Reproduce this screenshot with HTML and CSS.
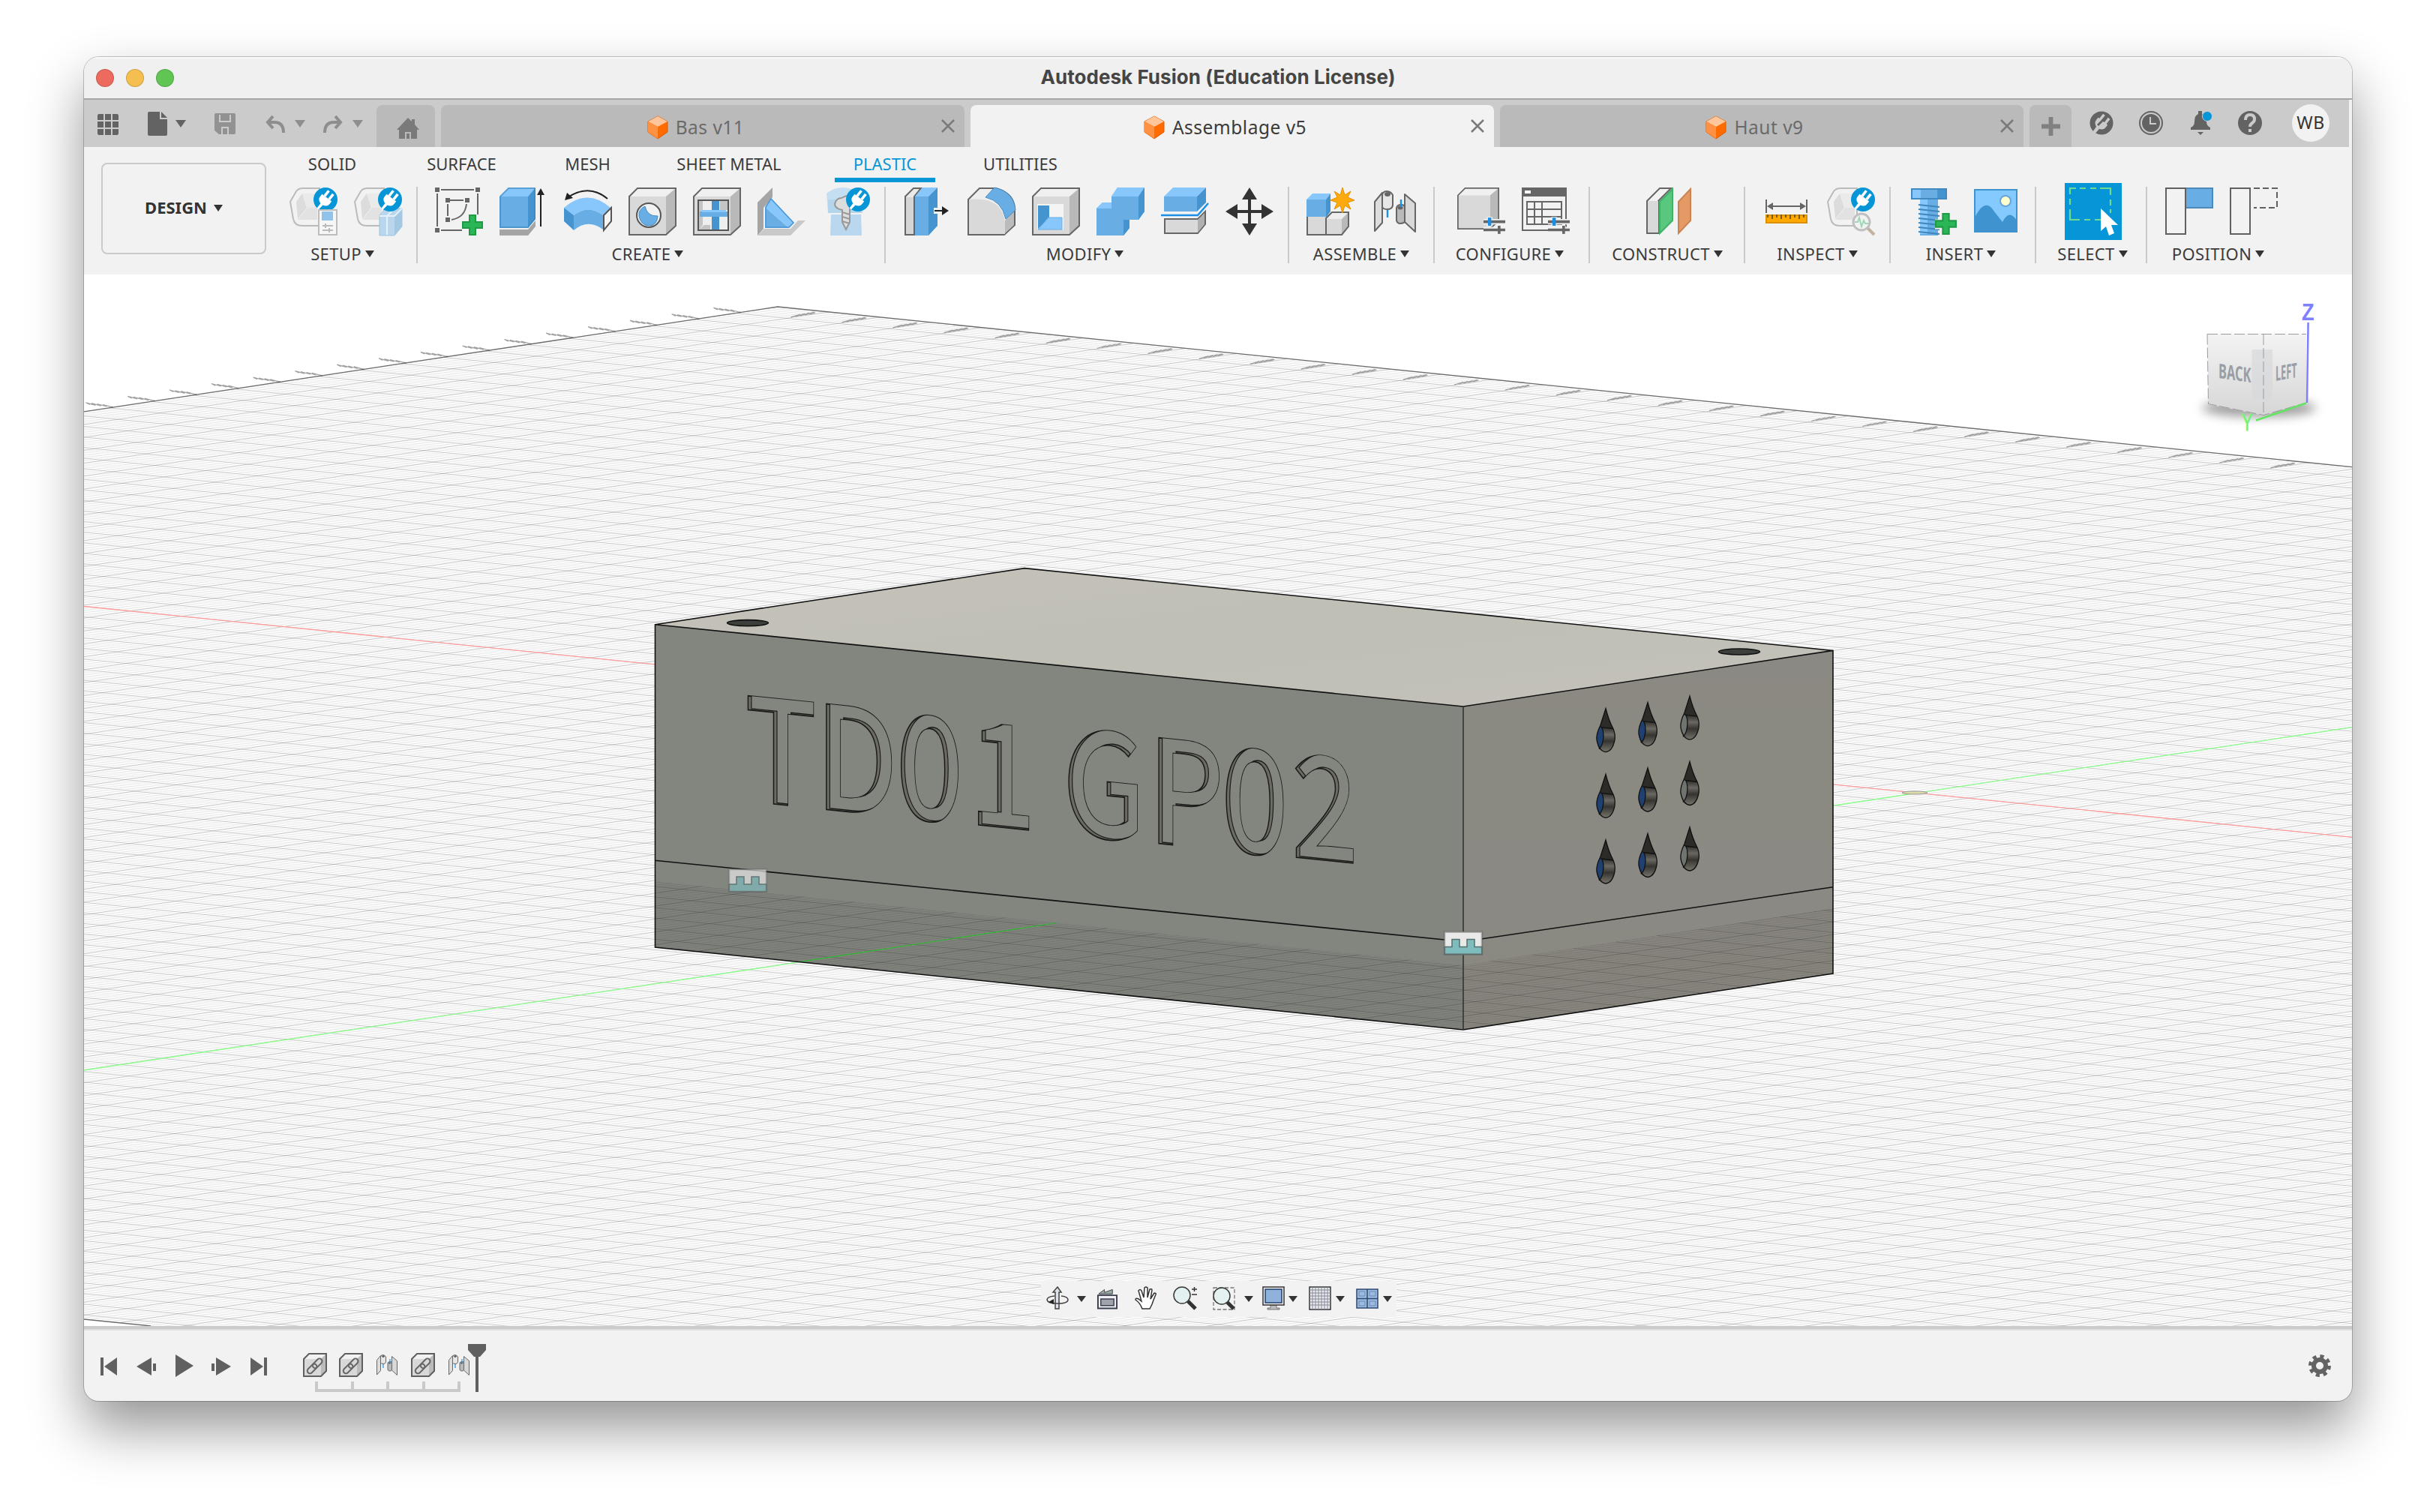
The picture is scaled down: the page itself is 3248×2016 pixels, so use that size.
FILE: index.html
```html
<!DOCTYPE html>
<html lang="en">
<head>
<meta charset="utf-8">
<title>Autodesk Fusion (Education License)</title>
<link rel="stylesheet" href="styles.css">
</head>
<body>
<svg class="sprite" aria-hidden="true">
  <defs>
    <symbol id="plug" viewBox="-16 -16 32 32" overflow="visible">
      <circle r="16" fill="#0696d7"/>
      <g transform="rotate(38)" fill="#fff"><path d="M-8-3H8v4a8 7 0 0 1-5.500 7L-2.500 8A8 7 0 0 1-8 1z"/><rect x="-5.500" y="-12" width="3.500" height="9"/><rect x="2" y="-12" width="3.500" height="9"/><path d="M-2 7h4l-1 9h-3z"/></g>
    </symbol>
    <symbol id="box" viewBox="0 0 64 64">
      <path d="M1 12 12 1h51L50 12z" fill="#f0f0f0"/><path d="M50 12 63 1v50L50 63z" fill="#b9b9b9"/><path d="M1 12h49v51H1z" fill="#d9d9d9"/>
      <path d="M1 12 12 1h51v50L50 63H1z" fill="none" stroke="#666" stroke-width="2"/>
    </symbol>
    <symbol id="shell" viewBox="0 0 64 64">
      <path d="M1 19 9 5q3-4 9-4h22v50H17q-10 0-12-9z" fill="#f2f2f2" stroke="#bbb" stroke-width="2"/>
      <path d="M9 19 17 8l6 19L11 42z" fill="#dcdcdc"/><path d="M17 8h20v19H23z" fill="#eaeaea"/><path d="M11 43l13-16h13v16z" fill="#e2e2e2"/>
    </symbol>
    <symbol id="doc" viewBox="0 0 30 34">
      <g fill="#ff6b00"><path d="M15 2 28 9v14L15 32 2 23V9z" stroke="#d95c00"/><path d="M15 2 28 9 15 16 2 9z" fill="#ffc69b"/><path d="M2 9l13 7v16L2 23z" fill="#ff9142"/></g>
    </symbol>
    <symbol id="close" viewBox="0 0 18 18"><path d="M1 1 17 17M17 1 1 17" stroke="#7a7a7a" stroke-width="2.500"/></symbol>
    <symbol id="link" viewBox="0 0 32 32">
      <path d="M1 8 8 1h23v23l-7 7H1z" fill="#f1f1f1"/><path d="M24 8 31 1v23l-7 7z" fill="#bbb"/><path d="M1 8h23v23H1z" fill="#d8d8d8"/>
      <path d="M1 8 8 1h23v23l-7 7H1z" fill="none" stroke="#5f5f5f" stroke-width="2"/>
      <g fill="none" stroke="#666" stroke-width="2" transform="rotate(-45 16 17)"><rect x="3" y="13.500" width="15" height="7" rx="3.500"/><rect x="13" y="13.500" width="15" height="7" rx="3.500"/></g>
    </symbol>
    <symbol id="joint" viewBox="0 0 64 64">
      <g stroke="#666" stroke-width="2" stroke-linejoin="round"><path d="M5 19 15 7v40L5 58z" fill="#ddd"/><path d="M15 10q1-5 6-5t8 5v14q-1 5-7 5t-7-3z" fill="#e6e6e6"/><ellipse cx="22" cy="9" rx="3" ry="2" fill="#666"/><path d="M45 9 59 21v38L45 46z" fill="#d8d8d8"/><path d="M34 27q1-4 6-4t5 3v20q-2 2-6 2t-5-4z" fill="#b9b9b9"/><ellipse cx="39" cy="27" rx="2.500" ry="1.500" fill="#666"/></g>
      <path d="M22 30v10M40 16v10" stroke="#1b8fe6" stroke-width="2.400"/>
    </symbol>
    <symbol id="sliders" viewBox="0 0 32 28" overflow="visible">
      <path d="M0 8h32M0 20h32M22 14v14M9 1v14" stroke="#f2f2f2" stroke-width="8"/>
      <path d="M0 8h32M0 20h32" stroke="#666" stroke-width="4"/><path d="M23 14v12" stroke="#666" stroke-width="4"/><path d="M9 2v12" stroke="#1b8fe6" stroke-width="5"/>
    </symbol>
    <symbol id="add" viewBox="0 0 28 28"><path d="M10 1h8v9h9v8h-9v9h-8v-9H1v-8h9z" fill="#2ab556" stroke="#219a45" stroke-width="2"/></symbol>
  </defs>
</svg>

<main class="window">
  <header class="titlebar">
    <div class="lights"><i class="light red"></i><i class="light amber"></i><i class="light green"></i></div>
    <h1 class="title">Autodesk Fusion (Education License)</h1>
  </header>

  <nav class="tabbar">
    <div class="quick">
      <svg class="q-grid" viewBox="0 0 28 28" fill="#636363"><path d="M0 2q0-2 2-2h6v8H0zM10 0h8v8h-8zM20 0h6q2 0 2 2v6h-8zM0 10h8v8H0zM10 10h8v8h-8zM20 10h8v8h-8zM0 20h8v8H2q-2 0-2-2zM10 20h8v8h-8zM20 20h8v6q0 2-2 2h-6z"/></svg>
      <svg class="q-file" viewBox="0 0 26 32" fill="#636363"><path d="M2 0h14v10h10v20q0 2-2 2H2q-2 0-2-2V2q0-2 2-2z"/><path d="M18 0l8 8h-8z"/></svg>
      <i class="caret big"></i>
      <svg class="q-save" viewBox="0 0 28 28" fill="#929292"><path fill-rule="evenodd" d="M2 0h24q2 0 2 2v24q0 2-2 2H6l-6-5V2q0-2 2-2zM6 2v10h16V2h-2v8H8V2zM9 18v10h2v-8h6v8h2V18z"/><path d="M12 22h3v6h-3z"/></svg>
      <svg class="q-undo" viewBox="0 0 26 24" fill="none" stroke="#8e8e8e" stroke-width="4"><path d="M10 2 3 10l7 8M4 10h8q12 0 12 14"/></svg>
      <i class="caret big pale"></i>
      <svg class="q-redo" viewBox="0 0 26 24" fill="none" stroke="#8e8e8e" stroke-width="4"><path d="M16 2l7 8-7 8M22 10h-8Q2 10 2 24"/></svg>
      <i class="caret big pale"></i>
    </div>
    <div class="tab home"><svg class="ic-home" viewBox="0 0 30 28" fill="#7a7a7a"><path d="M15 0l5 5V2h4v7l6 7h-3v12h-8v-9h-8v9H3V16H0z"/><path d="M13 21h4v7h-4z"/></svg></div>
    <div class="tab"><span class="name"><svg class="ic-doc"><use href="#doc"/></svg>Bas v11</span><svg class="ic-close"><use href="#close"/></svg></div>
    <div class="tab active"><span class="name"><svg class="ic-doc"><use href="#doc"/></svg>Assemblage v5</span><svg class="ic-close"><use href="#close"/></svg></div>
    <div class="tab"><span class="name"><svg class="ic-doc"><use href="#doc"/></svg>Haut v9</span><svg class="ic-close"><use href="#close"/></svg></div>
    <div class="tab plus"><svg class="ic-plus" viewBox="0 0 26 26"><path d="M13 0v26M0 13h26" stroke="#808080" stroke-width="6"/></svg></div>
    <div class="status">
      <svg class="ic-s" viewBox="-16 -16 32 32"><circle r="15.500" fill="#636363"/><g transform="rotate(38)" fill="#cbcbcb"><path d="M-8-3H8v3a8 8 0 0 1-5.500 8l-.5 9h-4l-.5-9A8 8 0 0 1-8 0z"/><rect x="-6" y="-11" width="3.500" height="9"/><rect x="2.500" y="-11" width="3.500" height="9"/></g><path d="M-5 3 3-5" stroke="#636363" stroke-width="3"/></svg>
      <svg class="ic-s" viewBox="-16 -16 32 32"><circle r="15" fill="none" stroke="#636363" stroke-width="2"/><circle r="12" fill="#636363"/><path d="M-1-8V1h8" fill="none" stroke="#cbcbcb" stroke-width="2"/></svg>
      <svg class="ic-s" viewBox="-16 -16 32 32"><path d="M-3-16h5v4q6 2 6 10 0 6 5 8v3h-26V6q5-2 5-8 0-8 5-10zM-4 12h8l-4 4z" fill="#636363"/><circle cx="9" cy="-9" r="6.500" fill="#0696d7" stroke="#cbcbcb"/></svg>
      <svg class="ic-s" viewBox="-16 -16 32 32"><circle r="16" fill="#636363"/><path d="M-6-4q0-7 6-7t6 6q0 3-3 5-3 2-3 5" fill="none" stroke="#cbcbcb" stroke-width="4"/><rect x="-2" y="8" width="4" height="4" fill="#cbcbcb"/></svg>
      <span class="avatar">WB</span>
    </div>
  </nav>

  <section class="ribbon">
    <button class="workspace">DESIGN<i class="caret"></i></button>
    <div class="panels">
      <div class="modes"><span>SOLID</span><span>SURFACE</span><span>MESH</span><span>SHEET METAL</span><span class="on">PLASTIC</span><span>UTILITIES</span></div>
      <div class="groups">
        <div class="group g-setup"><div class="icons">
          <svg viewBox="0 0 64 64"><use href="#shell" width="64" height="64"/><use href="#plug" x="32" y="0" width="32" height="32"/><path d="M39 30h24v33H39z" fill="#f6f6f6" stroke="#bdbdbd" stroke-width="2"/><path d="M43 32h15v12H43z" fill="#90c3eb"/><path d="M44 51h14M44 57h14M48 48v6M53 54v6" stroke="#bbb" stroke-width="2"/></svg>
          <svg viewBox="0 0 64 64"><use href="#shell" width="64" height="64"/><path d="M34 37 42 28h22v24L54 64H34z" fill="#b9d6ec" stroke="#9dc5e2"/><path d="M54 38 64 28v24L54 63z" fill="#a4c8e1"/><path d="M34 38h20l10-10M44 63V38l9-9" fill="none" stroke="#e4f1fa" stroke-width="2"/><use href="#plug" x="32" y="0" width="32" height="32"/></svg>
        </div><div class="label">SETUP<i class="caret"></i></div></div>

        <div class="group g-create"><div class="icons">
          <svg viewBox="0 0 64 64"><g stroke="#666" stroke-width="2" fill="none"><path d="M8 3h44M3 8v44M57 8v28M8 57h28M20 17h18M17 22v16M42 22q-2 18-20 21"/></g><path d="M0 0h6v6H0zM54 0h6v6h-6zM0 54h6v6H0zM14 14h6v6h-6zM40 14h6v6h-6zM14 40h6v6h-6z" fill="#666"/><use href="#add" x="36" y="36" width="28" height="28"/></svg>
          <svg viewBox="0 0 64 64"><path d="M0 56h38l10-12v8L38 64H0z" fill="#a5a5a5"/><path d="M0 12 12 0h36L38 12z" fill="#87c7fb"/><path d="M38 12 48 0v42L38 54z" fill="#4593cf"/><path d="M0 12h38v42H0z" fill="#68aee5"/><path d="M1 12 12 1h35v41L38 53H1z" fill="none" stroke="#3b83bd" stroke-opacity=".6" stroke-width="2"/><path d="M55 52V8" stroke="#222" stroke-width="2"/><path d="M55 1l5 9H50z" fill="#222"/></svg>
          <svg viewBox="0 0 64 64"><path d="M0 27q31-27 62 0L52 37Q32 22 13 37z" fill="#87c7fb"/><path d="M13 37q19-15 39 0v19Q32 41 13 57z" fill="#68aee5"/><path d="M0 27l13 10v20L0 45z" fill="#4593cf"/><path d="M53 37l10-10v18L53 57z" fill="#f5f5f5" stroke="#555" stroke-width="2"/><path d="M58 15Q34-5 7 12" fill="none" stroke="#222" stroke-width="2"/><path d="M1 17 4 7l8 7z" fill="#222"/></svg>
          <svg viewBox="0 0 64 64"><use href="#box" width="64" height="64"/><circle cx="27" cy="37" r="16" fill="#f2f2f2" stroke="#555" stroke-width="2"/><path d="M22 25q-9 4-8 13 2 12 13 13 11 0 12-13-14 1-17-13z" fill="#68aee5" stroke="#4289c0"/></svg>
          <svg viewBox="0 0 64 64"><use href="#box" width="64" height="64"/><path d="M7 17h40v40H7z" fill="#eee" stroke="#555" stroke-width="2"/><path d="M8 18h5v32l-5 6zM36 18h10v12H36zM8 56l7-6h8v6z" fill="#c4c4c4"/><path d="M25 18h10v38H25z" fill="#4593cf"/><path d="M9 32h37v7H9z" fill="#68aee5"/><path d="M12 30h32v3H12z" fill="#87c7fb"/></svg>
          <svg viewBox="0 0 64 64"><path d="M0 20 20 0v13L8 27v28L0 64z" fill="#a5a5a5"/><path d="M0 64l9-9h35l10-11h10L44 64z" fill="#c9c9c9"/><path d="M10 26v28h32z" fill="#68aee5"/><path d="M10 26l8-12 31 33-7 7z" fill="#87c7fb"/><path d="M11 26l7-11 30 32-6 6H11z" fill="none" stroke="#4c97d2" stroke-width="1.500"/></svg>
          <svg viewBox="0 0 64 64"><path d="M6 8Q20-4 40 2l14 8v24H8z" fill="#c4dff2"/><path d="M8 16h44v18H8z" fill="#b5d5ec"/><path d="M12 36h40l1 28H11z" fill="#b9d7ee"/><path d="M26 14q10-6 16 0v10l-5 4v18l-5 10-5-10V30q-10-2-10-8 2-8 9-8z" fill="#ddd" stroke="#999" stroke-width="2"/><path d="M27 33l10 3M27 39l10 3M27 45l10 3" stroke="#999" stroke-width="2"/><use href="#plug" x="32" y="0" width="32" height="32"/></svg>
        </div><div class="label">CREATE<i class="caret"></i></div></div>

        <div class="group g-modify"><div class="icons">
          <svg viewBox="0 0 64 64"><path d="M3 12 14 1h10L15 12v51H3z" fill="#eaeaea" stroke="#666" stroke-width="2"/><path d="M4 13h10v49H4z" fill="#d5d5d5"/><path d="M16 12 26 0h20L34 12z" fill="#87c7fb"/><path d="M34 12 46 0v51L34 64z" fill="#4593cf"/><path d="M16 12h18v52H16z" fill="#68aee5"/><path d="M41 31h20" stroke="#f2f2f2" stroke-width="8"/><path d="M42 31h12" stroke="#222" stroke-width="2"/><path d="M52 25v12l9-6z" fill="#222"/></svg>
          <svg viewBox="0 0 64 64"><path d="M1 16 16 1h22Q63 8 63 30v20L49 63H1z" fill="#eee" stroke="#666" stroke-width="2"/><path d="M50 44 62 30v20L49 62z" fill="#bbb"/><path d="M2 16q46-4 48 32v14H2z" fill="#d9d9d9"/><path d="M24 13 36 0q26 6 28 30L51 42Q46 18 24 13z" fill="#68aee5" stroke="#4289c0"/></svg>
          <svg viewBox="0 0 64 64"><use href="#box" width="64" height="64"/><path d="M7 22h35v34H7z" fill="#f4f4f4"/><path d="M8 24h15v18L8 55z" fill="#4593cf"/><path d="M8 56l14-16h18v16z" fill="#87c7fb" stroke="#68aee5"/></svg>
          <svg viewBox="0 0 64 64"><path d="M20 12 28 0h36v32l-8 11H44v11l-8 10H0V28l8-8h12z" fill="#68aee5"/><path d="M20 12 28 0h36l-8 12zM0 28l8-8h12v8z" fill="#87c7fb"/><path d="M56 12 64 0v32l-8 11zM36 43h8v11l-8 10z" fill="#4593cf"/></svg>
          <svg viewBox="0 0 64 64"><path d="M4 12 16 0h44L48 12z" fill="#87c7fb"/><path d="M48 12 60 0v20L48 32z" fill="#4593cf"/><path d="M4 12h44v20H4z" fill="#68aee5"/><path d="M0 37h49l14-16" fill="none" stroke="#1b8fe6" stroke-width="2.500"/><path d="M5 42h44l10-10v17L49 61H5z" fill="#d9d9d9" stroke="#666" stroke-width="2"/><path d="M49 43l9-9v15l-9 11z" fill="#b0b0b0"/></svg>
          <svg viewBox="0 0 64 64"><path d="M32 8v48M8 32h48" stroke="#333" stroke-width="4"/><path d="M32 0l10 16H22zM32 64l10-16H22zM0 32l16-10v20zM64 32 48 22v20z" fill="#333"/></svg>
        </div><div class="label">MODIFY<i class="caret"></i></div></div>

        <div class="group g-assemble"><div class="icons">
          <svg viewBox="0 0 64 64"><path d="M1 38h25v25H1z" fill="#d9d9d9"/><path d="M26 41l8-8h22v19L47 63H26z" fill="#eee"/><path d="M26 42h21v21H26z" fill="#d9d9d9"/><path d="M47 42l9-9v19l-9 11z" fill="#b9b9b9"/><path d="M1 38v25h46l9-11V33H34l-8 8v22" fill="none" stroke="#666" stroke-width="2"/><path d="M0 16 8 8h24l-6 8z" fill="#87c7fb"/><path d="M26 16l6-8v24l-6 8z" fill="#4593cf"/><path d="M0 16h26v23H0z" fill="#68aee5"/><path d="M48 0l3 10 8-5-4 8 9 4-9 3 4 9-8-5-3 10-3-10-8 5 4-9-9-3 9-4-4-8 8 5z" fill="#fdaa0e" stroke="#e39200"/></svg>
          <svg viewBox="0 0 64 64"><use href="#joint" width="64" height="64"/></svg>
        </div><div class="label">ASSEMBLE<i class="caret"></i></div></div>

        <div class="group g-configure"><div class="icons">
          <svg viewBox="0 0 64 64"><use href="#box" width="56" height="56"/><use href="#sliders" x="35" y="38" width="29" height="26"/></svg>
          <svg viewBox="0 0 64 64"><path d="M1 1h58v56H1z" fill="#f2f2f2" stroke="#666" stroke-width="2"/><path d="M0 0h60v12H0z" fill="#666"/><path d="M4 4h8v4H4z" fill="#fff"/><path d="M7 19h46v30H7zM7 29h46M7 39h46M17 19v30M27 19v30" fill="none" stroke="#666" stroke-width="2"/><use href="#sliders" x="35" y="38" width="29" height="26"/></svg>
        </div><div class="label">CONFIGURE<i class="caret"></i></div></div>

        <div class="group g-construct"><div class="icons">
          <svg viewBox="0 0 64 64"><path d="M5 18 22 1h15L20 18v43H5z" fill="#f2f2f2" stroke="#666" stroke-width="2"/><path d="M6 18h14v42H6z" fill="#d9d9d9"/><path d="M22 19 39 2v42L22 61z" fill="#59c87f" stroke="#41b069" stroke-width="2"/><path d="M47 19 63 2v42L47 61z" fill="#e59a66" stroke="#ca8451" stroke-width="2"/></svg>
        </div><div class="label">CONSTRUCT<i class="caret"></i></div></div>

        <div class="group g-inspect"><div class="icons">
          <svg viewBox="0 0 64 64"><path d="M5 16v18M59 16v18M8 25h48" stroke="#666" stroke-width="2"/><path d="M6 25l8-5v10zM58 25l-8-5v10z" fill="#666"/><path d="M5 37h54v10H5z" fill="#ffa900" stroke="#dd9100" stroke-width="2"/><path d="M7 36v4M13 36v6M19 36v4M25 36v6M31 36v4M37 36v6M43 36v4M49 36v6M55 36v4" stroke="#7a5a20" stroke-width="2"/></svg>
          <svg viewBox="0 0 64 64"><use href="#shell" width="64" height="64"/><use href="#plug" x="32" y="0" width="32" height="32"/><path d="M54 54l9 9" stroke="#c2b3a0" stroke-width="4"/><circle cx="46" cy="46" r="11" fill="#f2f2f2" stroke="#c0c0c0" stroke-width="3"/><path d="M37 46h4l2-6 3 12 3-8 2 4h4" fill="none" stroke="#9fd8b5" stroke-width="2"/></svg>
        </div><div class="label">INSPECT<i class="caret"></i></div></div>

        <div class="group g-insert"><div class="icons">
          <svg viewBox="0 0 64 64"><path d="M16 16h24v48H16z" fill="#68aee5"/><path d="M16 16h10v46H16z" fill="#87c7fb"/><path d="M14 23l28 3M14 29l28 3M14 35l28 3M14 41l28 3M14 47l28 3M14 53l28 3M14 59l28 3" stroke="#3f86bb" stroke-width="2"/><path d="M5 2h46v13H5z" fill="#68aee5" stroke="#4289c0" stroke-width="2"/><path d="M6 3h11v11H6z" fill="#87c7fb"/><path d="M39 3h11v11H39z" fill="#4593cf"/><path d="M50 34v30M36 49h28" stroke="#f2f2f2" stroke-width="13"/><use href="#add" x="36" y="34" width="29" height="29"/></svg>
          <svg viewBox="0 0 64 64"><path d="M3 3h56v56H3z" fill="#84caff" stroke="#3f93cf" stroke-width="2"/><circle cx="44" cy="18" r="7" fill="#ffffce" stroke="#64a7d6" stroke-width="2"/><path d="M3 40q14-28 26-8l11 14q9-18 19-2v15H3z" fill="#3f93cf"/></svg>
        </div><div class="label">INSERT<i class="caret"></i></div></div>

        <div class="group g-select"><div class="icons">
          <svg class="select" viewBox="0 0 76 76"><path d="M0 0h76v76H0z" fill="#0696d7"/><path d="M7 15V7h8M20 7h8M34 7h8M47 7h14v9M61 22v8M61 35v5M7 21v8M7 35v8M48 49h-8M34 49h-8M20 49H7v-6" fill="none" stroke="#6fda92" stroke-width="2.200"/><path d="M48 34v30l7-6 4 12 7-3-4-11h9z" fill="#fff"/></svg>
        </div><div class="label">SELECT<i class="caret"></i></div></div>

        <div class="group g-position"><div class="icons">
          <svg viewBox="0 0 64 64"><path d="M27 1h36v26H27z" fill="#68aee5" stroke="#4b8abb" stroke-width="2"/><path d="M1 1h26v61H1z" fill="#f2f2f2" stroke="#606060" stroke-width="2"/></svg>
          <svg viewBox="0 0 64 64"><path d="M1 1h26v61H1z" fill="#f2f2f2" stroke="#606060" stroke-width="2"/><path d="M32 1h31v26H32" fill="none" stroke="#606060" stroke-width="2" stroke-dasharray="8 4"/></svg>
        </div><div class="label">POSITION<i class="caret"></i></div></div>
      </div>
    </div>
  </section>

  <section class="viewport">
    <svg class="scene" viewBox="112 366 3024 1402">
      <defs>
        <clipPath id="ground"><path d="M1037 409 3136 622.700V1768H201L112 1759V548.800z"/></clipPath>
        <clipPath id="sunk"><path d="M873.500 1175 1951 1287l493-75.500V1298L1951 1373 873.500 1263z"/></clipPath>
        <linearGradient id="topFace" x1="0" y1="0" x2="1" y2="1"><stop offset="0" stop-color="#c5c1b9"/><stop offset=".5" stop-color="#bfbfb6"/><stop offset="1" stop-color="#c4c1b9"/></linearGradient>
        <linearGradient id="sideFace" x1="0" y1="0" x2="0" y2="1"><stop offset="0" stop-color="#8b8983"/><stop offset=".35" stop-color="#8b8a80"/><stop offset=".6" stop-color="#8b8984"/><stop offset="1" stop-color="#8a897f"/></linearGradient>
        <linearGradient id="wall" x1="0" y1="0" x2="0" y2="1"><stop offset="0" stop-color="#302f2b"/><stop offset=".45" stop-color="#35342f"/><stop offset=".6" stop-color="#6a6862"/><stop offset=".75" stop-color="#35342f"/><stop offset="1" stop-color="#77756c"/></linearGradient>
        <linearGradient id="cubeFace" x1="0" y1="0" x2="0" y2="1"><stop offset="0" stop-color="#f3f3f3"/><stop offset="1" stop-color="#d6d6d6"/></linearGradient>
        <filter id="soft" x="-30%" y="-80%" width="160%" height="260%"><feGaussianBlur stdDeviation="7"/></filter>
        <text id="engraving" class="engraving" transform="matrix(.83 .0848 0 1 1041 1073)" x="0 121.700 239 356 430 519 650.600 761.400 874.400" y="0">TD01 GP02</text>
        <clipPath id="engravingClip"><use href="#engraving"/></clipPath>
        <g id="drop">
          <path d="M0 0Q4 16 10 27 13 34 12 42 9 57 0 58-9 57-12 42-13 34-7 22z" fill="url(#wall)"/>
          <path d="M0 0Q4 16 10 27L-5 25-7 22z" fill="#2c2b28"/>
          <path d="M-7 24Q-3 26-3 37-4 50-9 54-14 42-11 31z" class="glass"/>
          <path d="M-7 24Q-3 26-3 37-4 50-9 54M-6 25 10 27M0 0Q4 16 10 27 13 34 12 42 9 57 0 58-9 57-12 42-13 34-7 22z" fill="none" stroke="#111" stroke-width="1.300"/>
        </g>
        <g id="badge"><path d="M0 0h50v30H0z" fill="#e9e9e9"/><path d="M0 20h10V10h10v10h10V10h10v10h10v10H0z" fill="#7fbcbd" stroke="#55706f" stroke-width="1.500"/><path d="M0 0h50v30H0z" fill="none" stroke="#666" stroke-opacity=".5" stroke-width="2.500"/></g>
      </defs>

      <g clip-path="url(#ground)" fill="none">
        <path d="M112 366h3024v1402H112z" fill="#fdfdfd"/>
        <path class="grid-minor"/>
        <path class="grid-major"/>
        <path d="M112 808.500 3136 1116.300" stroke="#ff9d9d" stroke-width="1.300"/>
        <path d="M112 1427 3136 969.700" stroke="#8dff8d" stroke-width="1.300"/>
      </g>
      <path d="M112 548.800 1037 409 3136 622.700M112 1759l89 9" fill="none" stroke="#6b6b6b" stroke-width="1.300"/>
      <path class="ruler" fill="none" stroke="#444" stroke-opacity=".5" stroke-width="1.200"/>
      <ellipse cx="2553" cy="1057" rx="17" ry="2" fill="#dddba8" stroke="#999"/>

      <path d="M873.500 832.700 1366 757.600 2444 867.400 1951 942z" fill="url(#topFace)"/>
      <path d="M873.500 832.700 1951 942v431L873.500 1263z" fill="#83867f"/>
      <path d="M1951 942 2444 867.400V1298l-493 75z" fill="url(#sideFace)"/>
      <g clip-path="url(#sunk)" fill="none">
        <path d="M873 1100h1600v300H873z" fill="#5d5644" fill-opacity=".04"/>
        <path class="grid-minor"/>
        <path class="grid-major"/>
        <path d="M860 1313.800 1412 1230" stroke="#30c030" stroke-width="1.200"/>
      </g>
      <g fill="none" stroke="#111" stroke-width="1.600">
        <path d="M873.500 832.700 1366 757.600 2444 867.400V1298l-493 75L873.500 1263zL1951 942 2444 867.400M873.500 1147.300 1951 1255.500 2444 1182.700"/>
        <path d="M1951 942v431" stroke="#333"/>
        <g fill="#3c3f3b"><ellipse cx="997" cy="830.600" rx="27.500" ry="4"/><ellipse cx="2319" cy="869" rx="27.500" ry="4"/></g>
      </g>

      <use href="#engraving" fill="#6c6b63" stroke="#1a1a18" stroke-width="1.800"/>
      <g clip-path="url(#engravingClip)"><use href="#engraving" x="4.500" y="-1.500" fill="#83867f" stroke="#1a1a18" stroke-width="1.400"/></g>

      <g class="blue">
        <use href="#drop" x="2141" y="944.700"/><use href="#drop" x="2197" y="936.600"/>
        <use href="#drop" x="2141" y="1032.300"/><use href="#drop" x="2197" y="1024"/>
        <use href="#drop" x="2141" y="1120"/><use href="#drop" x="2197" y="1111.500"/>
      </g>
      <g class="grey"><use href="#drop" x="2253" y="928.200"/><use href="#drop" x="2253" y="1015.500"/><use href="#drop" x="2253" y="1103"/></g>
      <use href="#badge" x="972" y="1159" opacity=".7"/>
      <use href="#badge" x="1926" y="1242.500"/>

      <ellipse cx="3012" cy="544" rx="76" ry="12" fill="#000" fill-opacity=".38" filter="url(#soft)"/>
      <path d="M2943 445.500 3018 446v108l-73.500-15z" fill="url(#cubeFace)"/>
      <path d="M3018 446l57-.5V537l-57 17z" fill="url(#cubeFace)"/>
      <path d="M3002.500 466h27.500v63l-12 5-15.500-4z" fill="#d5d8dc" fill-opacity=".7"/>
      <path d="M2943 445.500h132M3018 446v108M2943 445.500l1.500 93 73.500 15 57-16.500" fill="none" stroke="#9b9b9b" stroke-dasharray="14 4"/>
      <path d="M3077.600 430 3076 537" stroke="#7f7fff" stroke-width="2.500"/><path d="M3075 537.500 3008 560.500" stroke="#62e662" stroke-width="2.500"/>
      <g class="cube-text"><text transform="matrix(.61 .085 0 1 2958 504)">BACK</text><text transform="matrix(.47 -.085 0 1 3034 508)">LEFT</text></g>
      <text class="axis" transform="matrix(.88 0 0 1 3069 426.500)" fill="#7f7fff">Z</text><text class="axis y" transform="matrix(.7 0 0 1 2989 574)" fill="#71f571">Y</text>
    </svg>

    <div class="navbar">
      <svg viewBox="0 0 30 32"><g fill="#f5f5f5" stroke="#444" stroke-width="1.500"><path d="M15 1l5 7h-3v22h-5V8H9z" fill="#dfe2ea"/><path d="M11 13q-10 1-10 5 1 5 14 5 14 0 14-5 0-4-9-5" fill="none"/></g><path d="M3 21l7-4v7z" fill="#222"/></svg><i class="caret"></i>
      <svg class="look" viewBox="0 0 30 32"><path d="M2 12h26v18H2z" fill="#f0f0f4" stroke="#3a3f4c" stroke-width="2"/><path d="M6 17h18v9H6z" fill="#a0a4ad" stroke="#3a3f4c" stroke-width="1.500"/><path d="M3 10l8-6v4l11-4v6z" fill="#9aa" stroke="#444"/></svg>
      <svg class="hand" viewBox="0 0 30 32"><path d="M10 30Q7 22 1 18q0-3 4-1l4 3L5 6q2-3 4 0l3 9 1-13q2-2 4 0v13l3-11q3-1 3 1l-2 12 5-8q3 0 2 2-3 7-5 13l-3 6z" fill="#fff" stroke="#333" stroke-width="1.500"/></svg>
      <svg class="zoom" viewBox="0 0 32 32"><path d="M20 20l10 10" stroke="#333" stroke-width="5"/><circle cx="12" cy="12" r="11" fill="#e3f1f0" stroke="#3a3a3a" stroke-width="1.500"/><path d="M25 4h7M28.500 1v6M25 11h7" stroke="#333" stroke-width="1.500"/></svg>
      <svg class="fit" viewBox="0 0 32 32"><path d="M2 2h28v29H2z" fill="none" stroke="#777" stroke-width="1.300" stroke-dasharray="5 2.500"/><path d="M20 21l9 9" stroke="#333" stroke-width="5"/><circle cx="13" cy="13" r="11" fill="#e3f1f0" stroke="#3a3a3a" stroke-width="1.500"/></svg><i class="caret"></i>
      <svg class="display" viewBox="0 0 30 32"><path d="M11 25h8v4h4v2H7v-2h4z" fill="#bbb" stroke="#777"/><path d="M1 1h28v24H1z" fill="#f2f2f2" stroke="#333" stroke-width="1.500"/><path d="M4 4h22v18H4z" fill="#8fb2dd" stroke="#21406e" stroke-width="1.500"/></svg><i class="caret"></i>
      <svg class="gridicon" viewBox="0 0 30 32"><path d="M1 1h28v30H1z" fill="#e9e9f0" stroke="#333" stroke-width="1.500"/><path d="M5 1v30M9 1v30M13 1v30M17 1v30M21 1v30M25 1v30M1 5h28M1 9h28M1 13h28M1 17h28M1 21h28M1 25h28" stroke="#858a94"/></svg><i class="caret"></i>
      <svg class="views" viewBox="0 0 30 32"><path d="M1 4h28v25H1zM15 4v25M1 16.500h28" fill="#9cbbe0" stroke="#2c4770" stroke-width="1.500"/><path d="M4 7h8v6H4zM18 7h8v6h-8zM4 20h8v6H4zM18 20h8v6h-8z" fill="none" stroke="#6888b5"/></svg><i class="caret"></i>
    </div>
  </section>

  <footer class="timeline">
    <svg class="transport" viewBox="134 1804 224 34" fill="#606060"><path d="M134 1810h4v24h-4zM156 1810v24l-17-12zM182 1822l20-12v24zM204 1818h4v10h-4zM234 1806l24 15-24 15zM282 1818h4v10h-4zM288 1810l20 12-20 12zM334 1810l17 12-17 12zM352 1810h4v24h-4z"/></svg>
    <div class="history">
      <div class="features">
        <svg><use href="#link"/></svg><svg><use href="#link"/></svg><svg class="j"><use href="#joint"/></svg><svg><use href="#link"/></svg><svg class="j"><use href="#joint"/></svg>
      </div>
      <div class="bracket"><i></i><i></i><i></i><i></i><i></i></div>
      <svg class="marker" viewBox="0 0 24 64"><path d="M0 0h24v8l-8 9h-2v47h-4V17H8L0 8z" fill="#606060"/></svg>
    </div>
    <svg class="gear" viewBox="-15 -15 30 30"><circle r="8" fill="none" stroke="#636363" stroke-width="6"/><circle r="12.500" fill="none" stroke="#636363" stroke-width="5" stroke-dasharray="5 4.817"/></svg>
  </footer>
</main>
<script src="grid.js"></script>
</body>
</html>
```
FILE: styles.css
```css
* { box-sizing: border-box; }
body { margin: 0; width: 3248px; height: 2016px; padding: 76px 112px; overflow: hidden; background: #fff; color: #3b3b3b; font-family: "Noto Sans", "Open Sans", sans-serif; font-size: 22px; }
svg { display: block; flex: none; }
.sprite { position: absolute; width: 0; height: 0; }

.window { display: flex; flex-direction: column; width: 3024px; height: 1792px; overflow: hidden; border-radius: 20px; background: #f2f2f2; box-shadow: 0 0 0 1px rgba(0,0,0,.22), 0 36px 72px rgba(0,0,0,.42); }

.titlebar { display: grid; grid-template-columns: 300px 1fr 300px; align-items: center; height: 57px; border-bottom: 2px solid #a6a6a6; background: #f0f0f0; box-shadow: inset 0 2px #fafafa; }
.lights { display: flex; gap: 16px; padding-left: 16px; }
.light { width: 24px; height: 24px; border-radius: 50%; border: 1px solid rgba(0,0,0,.16); }
.red { background: #ed6a5e; }
.amber { background: #f5bf4f; }
.green { background: #61c554; }
.title { margin: 0 0 2px; text-align: center; font: 700 26px/52px Inter, sans-serif; letter-spacing: .05px; color: #454545; }

.tabbar { display: flex; align-items: flex-end; height: 63px; width: 3020px; background: #cbcbcb; }
.quick { display: flex; align-items: center; width: 390px; height: 56px; padding: 0 0 6px 18px; }
.q-grid { width: 28px; height: 28px; margin-top: 1px; }
.q-file { width: 26px; height: 32px; margin: 0 11px 0 39px; }
.q-save { width: 28px; height: 28px; margin: 0 40px 0 38px; }
.q-undo { width: 26px; height: 24px; margin-right: 13px; }
.q-redo { width: 26px; height: 24px; margin: 0 13px 0 24px; }
.caret { display: inline-block; width: 0; height: 0; border: solid transparent; border-width: 9px 6px 0; border-top-color: #333; }
.caret.big { border-width: 10px 7.500px 0; border-top-color: #636363; }
.caret.pale { border-top-color: #8e8e8e; }
.tab { display: flex; align-items: center; width: 698px; height: 56px; margin-right: 8px; padding-right: 13px; border-radius: 8px 8px 0 0; background: #bababa; color: #6a6a6a; }
.tab.active { background: #f2f2f2; color: #3b3b3b; }
.home { width: 78px; padding: 6px 0 0 27px; }
.plus { width: 56px; justify-content: center; padding: 0; margin-right: 24px; }
.name { flex: 1; display: flex; align-items: center; justify-content: center; gap: 9px; font-size: 24.500px; line-height: 30px; letter-spacing: .5px; padding-top: 3px; padding-left: 11px; }
.ic-home { width: 30px; height: 28px; }
.ic-doc { width: 30px; height: 34px; }
.ic-close { width: 18px; height: 18px; }
.ic-plus { width: 25px; height: 25px; }
.status { display: flex; align-items: center; gap: 34px; height: 56px; padding-bottom: 8px; }
.ic-s { width: 32px; height: 32px; }
.avatar { width: 50px; height: 50px; margin-left: 6px; border-radius: 50%; background: #f2f2f2; text-align: center; font-size: 23px; line-height: 49px; letter-spacing: .5px; color: #333; }

.ribbon { display: flex; height: 170px; background: #f2f2f2; }
.workspace { display: flex; align-items: center; justify-content: center; gap: 9px; width: 220px; height: 122px; margin: 21px 5px 0 23px; border: 2px solid #cacaca; border-radius: 8px; background: #f2f2f2; color: #333; font: 700 22px/28px "Noto Sans", sans-serif; padding: 0 0 4px; }
.workspace .caret { margin-top: 2px; }
.modes { display: grid; grid-template-columns: 166px 179px 157px 220px 196px 165px; height: 47px; }
.modes span { justify-self: center; line-height: 44px; height: 47px; white-space: nowrap; }
.modes .on { width: 134px; border-bottom: 6px solid #0696d7; color: #0696d7; text-align: center; }
.groups { display: flex; height: 108px; margin-top: 6px; }
.group { display: flex; flex-direction: column; align-items: center; height: 102px; border-right: 2px solid #c9c9c9; }
.g-setup { width: 197px; padding-left: 6px; }
.g-create { width: 624px; }
.g-modify { width: 538px; }
.g-assemble { width: 194px; }
.g-configure { width: 207px; padding-left: 4px; }
.g-construct { width: 207px; }
.g-inspect { width: 194px; }
.g-insert { width: 194px; }
.g-select { width: 148px; padding-left: 6px; }
.g-position { width: 198px; border-right: 0; }
.icons { display: flex; gap: 22px; height: 64px; margin-top: 1px; }
.icons svg { width: 64px; height: 64px; overflow: visible; }
.g-create .icons, .g-modify .icons, .g-assemble .icons, .g-insert .icons { margin-left: 4px; }
.g-inspect .icons { margin-left: 3px; }
.icons .select { width: 76px; height: 76px; margin-top: -6px; }
.label { display: flex; align-items: center; gap: 5px; margin-top: 9px; line-height: 30px; height: 30px; white-space: nowrap; letter-spacing: .35px; }
.label .caret { margin-top: 0; }
.g-setup .label { margin-right: 8px; }
.g-create .label { margin-right: 9px; }
.g-modify .label { margin-right: 5px; }
.g-configure .label { margin-right: 9px; }
.g-construct .label { margin-left: 1px; }
.g-insert .label { margin-right: 5px; }
.g-select .label { margin-right: 2px; }
.g-position .label { margin-right: 9px; }

.viewport { position: relative; height: 1402px; background: #fff; }
.scene { width: 3024px; height: 1402px; }
.grid-minor { stroke: #000; stroke-opacity: .05; stroke-width: 1; }
.grid-major { stroke: #000; stroke-opacity: .19; stroke-width: 1; }
.engraving { font-family: "Noto Sans CJK JP", sans-serif; font-weight: 500; font-size: 191px; text-anchor: middle; }
.blue { --glass: #20406f; }
.grey { --glass: #707470; }
.glass { fill: var(--glass); }
.cube-text { font-weight: 700; font-size: 27px; fill: #9a9ea4; }
.axis { font: 700 31px "Liberation Sans", sans-serif; }
.axis.y { font-weight: 400; stroke: #71f571; stroke-width: .8px; }

.navbar { position: absolute; left: 1276px; top: 1342px; display: flex; align-items: center; width: 474px; height: 48px; padding: 0 0 2px 7px; background: #f2f2f2; }
.navbar svg { width: 30px; height: 32px; }
.navbar .caret { border-width: 8px 6px 0; margin: 2px 0 0 11px; }
.navbar .look { margin-left: 14px; width: 29px; }
.navbar .hand { margin-left: 22px; }
.navbar .zoom { margin-left: 21px; width: 32px; }
.navbar .fit { margin-left: 20px; width: 32px; }
.navbar .display { margin-left: 12px; }
.navbar .display + .caret { margin-left: 5px; }
.navbar .gridicon { margin-left: 15px; }
.navbar .gridicon + .caret { margin-left: 6px; }
.navbar .views { margin-left: 15px; }
.navbar .views + .caret { margin-left: 6px; }

.timeline { display: flex; height: 100px; border-top: 4px solid #cbcbcb; box-shadow: inset 0 2px #dedede; }
.transport { width: 224px; height: 34px; margin: 32px 0 0 22px; }
.history { display: grid; grid-template-columns: 220px 24px; grid-template-rows: 18px 32px 14px; margin: 20px 0 0 46px; height: 64px; }
.features { grid-area: 1 / 1 / 3 / 2; display: flex; align-items: flex-start; gap: 16px; padding-top: 12px; }
.features svg { width: 32px; height: 32px; }
.bracket { grid-area: 3 / 1; display: flex; justify-content: space-between; width: 194px; height: 14px; margin-left: 16px; border-bottom: 4px solid #c9c9c9; }
.bracket i { width: 4px; background: #c9c9c9; }
.marker { grid-area: 1 / 2 / 4 / 3; width: 24px; height: 64px; }
.gear { width: 30px; height: 30px; margin: 34px 28px 0 auto; }
```
FILE: grid.js
```js
// Ground plane: two families of parallel lines meeting at the far corner.
const corner = { x: 1037, y: 409 };
const left = 112, right = 3136;
const families = [
  { slope: 0.1018, step: 14.1, count: 110 },
  { slope: -0.1511, step: 17.21, count: 110 },
];

function lines(divisions, skipWhole) {
  let d = "";
  for (const f of families) {
    for (let k = 0; k < f.count * divisions; k++) {
      if (skipWhole && k % divisions === 0) continue;
      const y = corner.y + (k / divisions) * f.step;
      d += `M${left} ${(y + (left - corner.x) * f.slope).toFixed(2)}L${right} ${(y + (right - corner.x) * f.slope).toFixed(2)}`;
    }
  }
  return d;
}

const major = lines(1, false);
const minor = lines(5, true);
document.querySelectorAll(".grid-major").forEach((p) => p.setAttribute("d", major));
document.querySelectorAll(".grid-minor").forEach((p) => p.setAttribute("d", minor));

// Foreshortened ruler marks beside the two far edges.
function mark(x, y, dx, dy, lean) {
  let d = `M${x} ${y}`;
  for (let i = 1; i <= 9; i++) {
    const t = i / 9;
    const side = i % 2 ? 1.5 : -1.5;
    d += `L${(x + dx * t + side * lean).toFixed(1)} ${(y + dy * t + side).toFixed(1)}`;
  }
  return d;
}
let ruler = "";
for (let k = 1; k <= 16; k++) {
  ruler += mark(corner.x - 55.8 * k + 5, corner.y + 8.43 * k - 2, -34, -4, 3);
}
for (let k = 1; k <= 30; k++) {
  ruler += mark(corner.x + 68.03 * k - 18, corner.y + 6.93 * k + 1, -28, 4.5, -3);
}
document.querySelector(".ruler").setAttribute("d", ruler);
```
